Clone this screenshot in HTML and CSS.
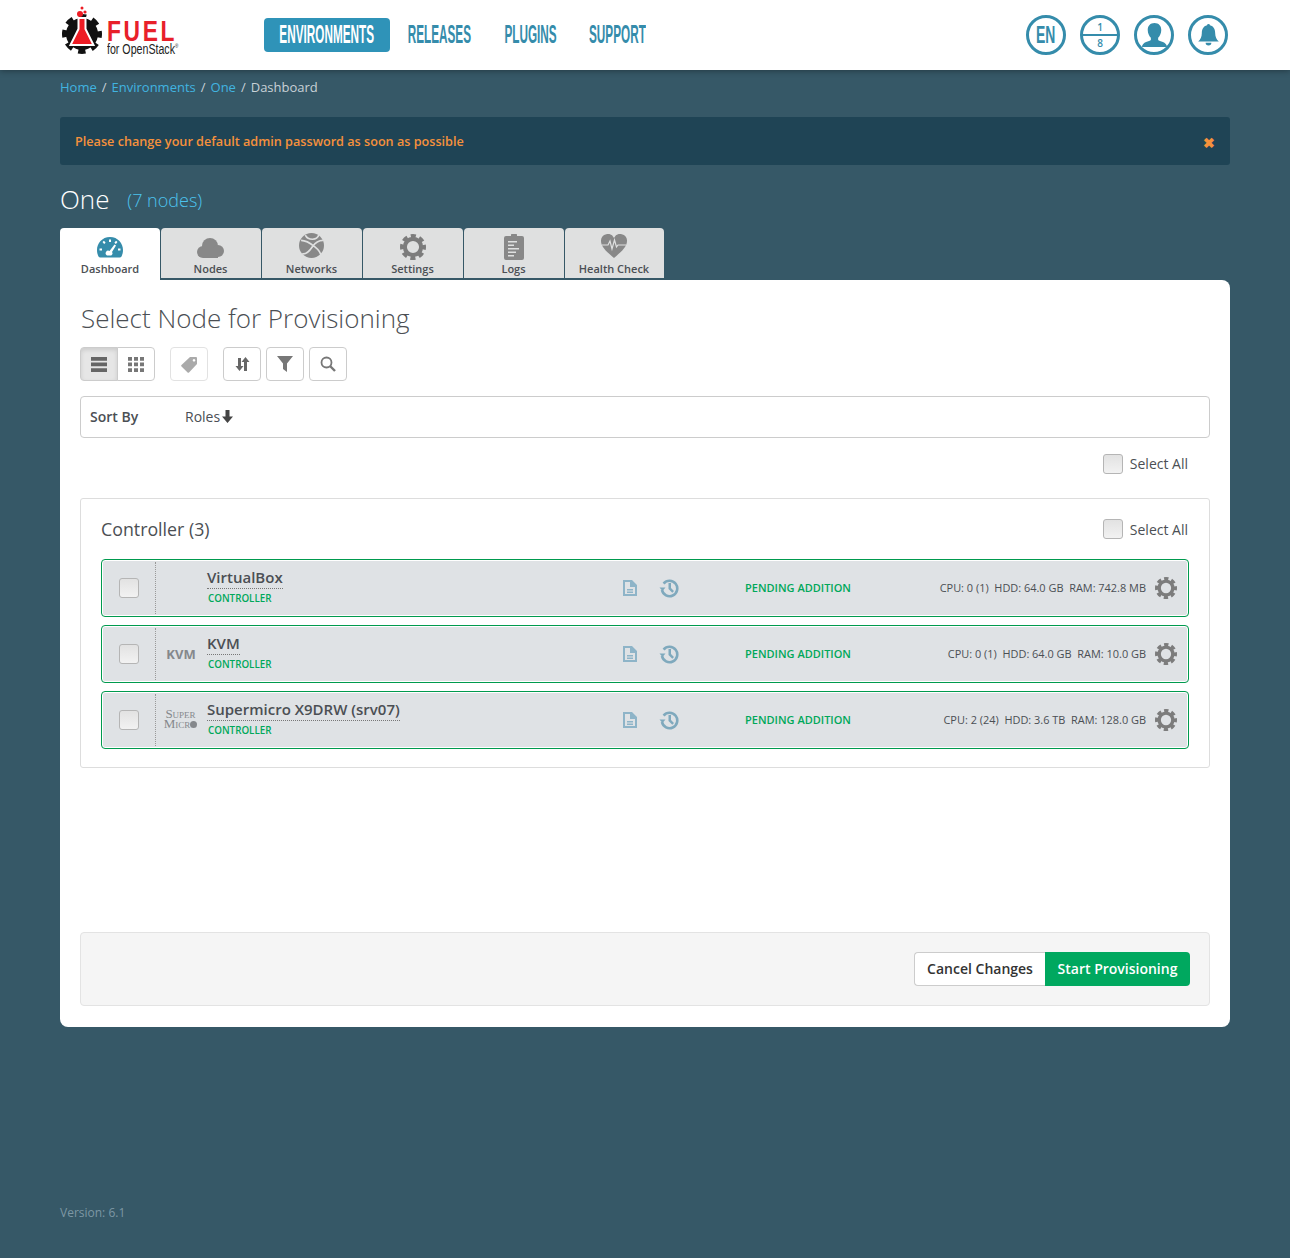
FILE: index.html
```html
<!DOCTYPE html>
<html lang="en">
<head>
    <meta charset="UTF-8">
    <meta name="viewport" content="width=device-width, initial-scale=1.0">
    <title>One - Dashboard</title>
    <link rel="stylesheet" href="styles.css">
</head>
<body>
    <svg class="sprites" width="0" height="0" aria-hidden="true">
        <symbol id="gear" viewBox="0 0 24 24">
            <circle cx="12" cy="12" r="10" fill="none" stroke="currentColor" stroke-width="4" stroke-dasharray="4.6 3.25" stroke-dashoffset="2.3"/>
            <circle cx="12" cy="12" r="7.500" fill="none" stroke="currentColor" stroke-width="3.800"/>
        </symbol>
        <symbol id="doc" viewBox="0 0 14 16">
            <path fill="currentColor" fill-rule="evenodd" d="M0 0h9l5 5v11H0zM2 2v12h10V7H7V2zM4 9h6v1.500H4zM4 11.500h6V13H4z"/>
        </symbol>
        <symbol id="history" viewBox="0 0 20 20">
            <path fill="none" stroke="currentColor" stroke-width="2.600" d="M4.600 5.600A7.700 7.700 0 1 1 3 12"/>
            <path fill="currentColor" d="M0.500 9.500H6.500L3.500 13zM9.500 5H12V10L15 13L13.300 14.700L9.500 11z"/>
        </symbol>
    </svg>

    <header class="topbar">
        <a class="logo" href="#">
            <svg class="logo-mark" width="42" height="50" viewBox="0 0 42 50">
                <circle cx="20" cy="28" r="17" fill="none" stroke="#111" stroke-width="6" stroke-dasharray="7.200 6.150" stroke-dashoffset="3.600" />
                <circle cx="20" cy="28" r="16" fill="#111" />
                <path fill="#ed1c24" stroke="#fff" stroke-width="2" d="M16.500 12h7v11l8 16H8.500l8-16z" />
                <circle cx="18" cy="8" r="3" fill="#ed1c24" />
                <circle cx="23" cy="6" r="1.600" fill="#ed1c24" />
                <circle cx="20" cy="2" r="1.500" fill="#ed1c24" />
            </svg>
            <span class="logo-text">
                <span class="logo-fuel">FUEL</span>
                <span class="logo-sub">for OpenStack<sup>®</sup></span>
            </span>
        </a>
        <nav class="main-nav">
            <a class="nav-item active" href="#"><span>Environments</span></a>
            <a class="nav-item" href="#"><span>Releases</span></a>
            <a class="nav-item" href="#"><span>Plugins</span></a>
            <a class="nav-item" href="#"><span>Support</span></a>
        </nav>
        <div class="top-icons">
            <div class="round-icon lang"><span>EN</span></div>
            <div class="round-icon capacity"><span>1</span><i></i><span>8</span></div>
            <div class="round-icon">
                <svg width="25" height="24" viewBox="0 0 24 26" preserveAspectRatio="none"><path fill="#358cab" d="M12 0c4 0 6.500 3 6.500 7.500 0 3.500-1.500 7-3 8.500v2.500c1 1.500 8.500 2 8.500 7.500H0c0-5.500 7.500-6 8.500-7.500V16c-1.500-1.500-3-5-3-8.500C5.500 3 8 0 12 0z"/></svg>
            </div>
            <div class="round-icon">
                <svg width="21" height="24" viewBox="0 0 22 26" preserveAspectRatio="none"><path fill="#358cab" d="M9.500 2.500a1.500 1.500 0 0 1 3 0C16.500 3.500 18 7 18 11c0 4 1.500 7 3.800 9H.2C2.500 18 4 15 4 11c0-4 1.500-7.500 5.500-8.500zM8 21.500h6a3 3 0 0 1-6 0z"/></svg>
            </div>
        </div>
    </header>

    <main class="page">
        <div class="breadcrumb">
            <a href="#">Home</a><b>/</b><a href="#">Environments</a><b>/</b><a href="#">One</a><b>/</b><span>Dashboard</span>
        </div>

        <div class="alert">
            <span>Please change your default admin password as soon as possible</span>
            <span class="alert-close">✖</span>
        </div>

        <h1 class="env-title">One <span>(7 nodes)</span></h1>

        <div class="tabs">
            <a class="tab active" href="#">
                <svg width="28" height="22" viewBox="0 0 28 22"><path fill="#358cab" fill-rule="evenodd" d="M14 1C6 1 1 7.500 1 14c0 2.500.5 4.500 1.500 6.500 .4.700 1 1 1.800 1h19.400c.8 0 1.400-.3 1.800-1C26.500 18.500 27 16.500 27 14 27 7.500 22 1 14 1zM13 3.500h2v2.500h-2zM6.500 6l1.500-1.300 1.600 2-1.500 1.300zM21.500 6L20 4.700l-1.600 2 1.500 1.300zM3.500 12.500H6v2H3.500zM22 12.500h2.500v2H22zM18.500 8.500l1.500 1-4 6.500a2.500 2.500 0 0 1-.8 3.500H11a2.500 2.500 0 0 1 2.500-4.500z"/></svg>
                <span>Dashboard</span>
            </a>
            <a class="tab" href="#">
                <svg width="27" height="20" viewBox="0 0 27 20"><g fill="#888"><circle cx="6" cy="14" r="6"/><circle cx="13" cy="8" r="8"/><circle cx="21" cy="13" r="6"/><rect x="6" y="10" width="15" height="10"/></g></svg>
                <span>Nodes</span>
            </a>
            <a class="tab" href="#">
                <svg width="25" height="25" viewBox="0 0 24 24"><circle cx="12" cy="12" r="12" fill="#888"/><path fill="none" stroke="#dfe0e0" stroke-width="1.600" d="M2 7c4 0 8 2 13 6s6 7 6 9M23 7c-5 0-8 3-10 6s-5 8-10 7M6 2c1 2 4 4 7 4s5-1 6-4"/></svg>
                <span>Networks</span>
            </a>
            <a class="tab" href="#">
                <svg class="tab-gear" width="26" height="26"><use href="#gear"/></svg>
                <span>Settings</span>
            </a>
            <a class="tab" href="#">
                <svg class="tab-logs" width="20" height="26" viewBox="0 0 20 26"><path fill="#888" fill-rule="evenodd" d="M2 2h5V1.500a3 3 0 0 1 6 0V2h5a2 2 0 0 1 2 2v20a2 2 0 0 1-2 2H2a2 2 0 0 1-2-2V4a2 2 0 0 1 2-2zM4 7v1.500h9V7zM4 10.500V12h6v-1.500zM4 14v1.500h11V14zM4 17.500V19h8v-1.500zM4 21v1.500h6V21z"/></svg>
                <span>Logs</span>
            </a>
            <a class="tab" href="#">
                <svg width="26" height="24" viewBox="0 0 26 24"><path fill="#888" d="M13 24C6 18 0 13 0 7a6.800 6.800 0 0 1 13-3 6.800 6.800 0 0 1 13 3c0 6-6 11-13 17z"/><path fill="none" stroke="#dfe0e0" stroke-width="1.200" d="M1 11h6l2-4 2 8 2.500-9 2 7 1.500-2h8"/></svg>
                <span>Health Check</span>
            </a>
        </div>

        <section class="panel">
            <h2 class="panel-title">Select Node for Provisioning</h2>

            <div class="toolbar">
                <div class="btn-group">
                    <button class="tool-btn pressed">
                        <svg width="16" height="15" viewBox="0 0 16 14" preserveAspectRatio="none"><path fill="#666" d="M0 0h16v3.500H0zM0 5.200h16v3.500H0zM0 10.500h16V14H0z"/></svg>
                    </button>
                    <button class="tool-btn">
                        <svg width="16" height="15" viewBox="0 0 16 14" preserveAspectRatio="none"><path fill="#777" d="M0 0h4v3.500H0zM6 0h4v3.500H6zM12 0h4v3.500h-4zM0 5.200h4v3.500H0zM6 5.200h4v3.500H6zM12 5.200h4v3.500h-4zM0 10.500h4V14H0zM6 10.500h4V14H6zM12 10.500h4V14h-4z"/></svg>
                    </button>
                </div>
                <button class="tool-btn solo dim">
                    <svg width="17" height="17" viewBox="0 0 17 17"><path fill="#aaa" fill-rule="evenodd" d="M9 1h6a1 1 0 0 1 1 1v6L8 16.500a1 1 0 0 1-1.400 0L.500 10.400a1 1 0 0 1 0-1.400zM13 3a1.300 1.300 0 1 0 .01 0z"/></svg>
                </button>
                <button class="tool-btn solo">
                    <svg width="15" height="15" viewBox="0 0 15 15"><path fill="#666" d="M3 1h3v8h2.500L4.500 14 .5 9H3zM9 14V5H6.500L10.500 0 14.500 5H12v9z"/></svg>
                </button>
                <button class="tool-btn solo near">
                    <svg width="16" height="16" viewBox="0 0 16 16"><path fill="#777" d="M0 0h16L10 7.500V16L6 13V7.500z"/></svg>
                </button>
                <button class="tool-btn solo near">
                    <svg width="16" height="16" viewBox="0 0 16 16"><circle cx="6.500" cy="6.500" r="5" fill="none" stroke="#777" stroke-width="1.800"/><path stroke="#777" stroke-width="2.400" d="M10 10l5 5"/></svg>
                </button>
            </div>

            <div class="sort-bar">
                <strong>Sort By</strong>
                <span class="sort-item">Roles<svg width="11" height="13" viewBox="0 0 11 13"><path fill="#444" d="M3.500 0h4v6.500h3.500L5.500 13 0 6.500h3.500z"/></svg></span>
            </div>

            <label class="select-all top"><span class="check"></span>Select All</label>

            <div class="group">
                <div class="group-head">
                    <h3>Controller (3)</h3>
                    <label class="select-all"><span class="check"></span>Select All</label>
                </div>

                <div class="node">
                    <div class="node-check"><span class="check"></span></div>
                    <div class="node-logo"></div>
                    <div class="node-info">
                        <div class="node-name">VirtualBox</div>
                        <div class="node-role">CONTROLLER</div>
                    </div>
                    <svg class="node-doc" width="14" height="16"><use href="#doc"/></svg>
                    <svg class="node-history" width="20" height="20"><use href="#history"/></svg>
                    <div class="node-status">PENDING ADDITION</div>
                    <div class="node-specs">CPU: 0 (1)&nbsp; HDD: 64.0 GB&nbsp; RAM: 742.8 MB</div>
                    <svg class="node-gear" width="22" height="22"><use href="#gear"/></svg>
                </div>

                <div class="node">
                    <div class="node-check"><span class="check"></span></div>
                    <div class="node-logo kvm">KVM</div>
                    <div class="node-info">
                        <div class="node-name">KVM</div>
                        <div class="node-role">CONTROLLER</div>
                    </div>
                    <svg class="node-doc" width="14" height="16"><use href="#doc"/></svg>
                    <svg class="node-history" width="20" height="20"><use href="#history"/></svg>
                    <div class="node-status">PENDING ADDITION</div>
                    <div class="node-specs">CPU: 0 (1)&nbsp; HDD: 64.0 GB&nbsp; RAM: 10.0 GB</div>
                    <svg class="node-gear" width="22" height="22"><use href="#gear"/></svg>
                </div>

                <div class="node">
                    <div class="node-check"><span class="check"></span></div>
                    <div class="node-logo smc"><span>Super</span><span>Micr<i></i></span></div>
                    <div class="node-info">
                        <div class="node-name">Supermicro X9DRW (srv07)</div>
                        <div class="node-role">CONTROLLER</div>
                    </div>
                    <svg class="node-doc" width="14" height="16"><use href="#doc"/></svg>
                    <svg class="node-history" width="20" height="20"><use href="#history"/></svg>
                    <div class="node-status">PENDING ADDITION</div>
                    <div class="node-specs">CPU: 2 (24)&nbsp; HDD: 3.6 TB&nbsp; RAM: 128.0 GB</div>
                    <svg class="node-gear" width="22" height="22"><use href="#gear"/></svg>
                </div>
            </div>

            <div class="actions">
                <button class="btn-cancel">Cancel Changes</button>
                <button class="btn-start">Start Provisioning</button>
            </div>
        </section>

        <footer class="version">Version: 6.1</footer>
    </main>
</body>
</html>
```

FILE: styles.css
```css
* {
    box-sizing: border-box;
}

body {
    margin: 0;
    height: 1258px;
    overflow: hidden;
    background: #365867;
    color: #4b4f54;
    font-family: "Open Sans", Arial, sans-serif;
    font-size: 14px;
}

a {
    text-decoration: none;
}

.sprites {
    position: absolute;
}

/* top bar */
.topbar {
    display: flex;
    align-items: center;
    height: 70px;
    padding: 0 62px;
    background: #fff;
    box-shadow: 0 1px 6px rgba(0, 0, 0, 0.35);
}

.logo {
    display: flex;
    align-items: flex-start;
    align-self: flex-start;
    width: 202px;
    height: 58px;
    margin-top: 6px;
}

.logo-text {
    display: flex;
    flex-direction: column;
    margin: 13px 0 0 3px;
}

.logo-fuel {
    color: #e8202a;
    font-family: "Liberation Sans", Arial, sans-serif;
    font-weight: 700;
    font-size: 30px;
    line-height: 24px;
    letter-spacing: 3.5px;
    transform: scaleX(0.76);
    transform-origin: left;
}

.logo-sub {
    color: #222;
    font-family: "Liberation Sans", Arial, sans-serif;
    font-size: 14px;
    line-height: 13px;
    white-space: nowrap;
    transform: scaleX(0.76);
    transform-origin: left;
}

.logo-sub sup {
    font-size: 6px;
    line-height: 0;
}

.main-nav {
    display: flex;
    align-items: center;
}

.nav-item {
    display: flex;
    justify-content: center;
    align-items: center;
    height: 34px;
    padding-bottom: 2px;
    color: #358cab;
    font-family: "Liberation Sans", Arial, sans-serif;
    font-weight: 700;
    font-size: 25px;
    text-transform: uppercase;
}

.nav-item span {
    transform: scaleX(0.47);
    white-space: nowrap;
}

.nav-item:nth-child(1) {
    width: 126px;
}

.nav-item:nth-child(2) {
    width: 63px;
    margin-left: 18px;
}

.nav-item:nth-child(3) {
    width: 51px;
    margin-left: 34px;
}

.nav-item:nth-child(4) {
    width: 56px;
    margin-left: 33px;
}

.nav-item.active {
    background: #2f93b8;
    border-radius: 4px;
    color: #fff;
}

.top-icons {
    display: flex;
    gap: 14px;
    margin-left: auto;
}

.round-icon {
    display: flex;
    flex-direction: column;
    justify-content: center;
    align-items: center;
    width: 40px;
    height: 40px;
    border: 3px solid #358cab;
    border-radius: 50%;
    color: #358cab;
}

.round-icon.lang span {
    font-family: "Liberation Sans", Arial, sans-serif;
    font-weight: 700;
    font-size: 24px;
    transform: scaleX(0.58);
}

.round-icon.capacity {
    font-size: 10px;
    font-weight: 600;
    line-height: 12px;
}

.round-icon.capacity i {
    display: block;
    width: 100%;
    height: 2px;
    margin: 1px 0;
    background: #358cab;
}

/* page */
.page {
    padding: 0 60px;
}

.breadcrumb {
    display: flex;
    align-items: center;
    gap: 5px;
    height: 34px;
    font-size: 13px;
    color: #c8d1d6;
}

.breadcrumb a {
    color: #41b4e0;
}

.breadcrumb b {
    font-weight: 400;
}

.alert {
    display: flex;
    justify-content: space-between;
    align-items: center;
    height: 48px;
    margin-top: 13px;
    padding: 0 15px;
    background: #1f4455;
    border-radius: 3px;
    color: #f5913c;
    font-size: 12.650px;
    font-weight: 600;
}

.alert-close {
    font-size: 14px;
    margin-top: 2px;
}

.env-title {
    margin: 15px 0 0;
    height: 48px;
    color: #fff;
    font-size: 26px;
    font-weight: 300;
    line-height: 38px;
}

.env-title span {
    margin-left: 11px;
    color: #4cc3ee;
    font-size: 18px;
    line-height: 1;
    vertical-align: 2px;
}

.tabs {
    display: flex;
    gap: 1px;
    height: 50px;
}

.tab {
    display: flex;
    flex-direction: column;
    justify-content: flex-end;
    align-items: center;
    width: 100px;
    padding: 0 1px 2px 0;
    background: #dfe0e0;
    border-radius: 4px 4px 0 0;
    color: #4b4f54;
    font-size: 11px;
    font-weight: 600;
}

.tab:last-child {
    width: 99px;
}

.tab svg {
    margin-bottom: 3px;
}

.tab span {
    line-height: 15px;
}

.tab .tab-gear,
.tab .tab-logs {
    margin-bottom: 1px;
}

.tab-gear {
    color: #7c7c7c;
}

.tab.active {
    height: 52px;
    padding: 0 0 4px;
    background: #fff;
    position: relative;
    z-index: 1;
}

.panel {
    height: 747px;
    margin-top: 2px;
    padding: 20px;
    background: #fff;
    border-radius: 0 8px 8px 8px;
}

.panel-title {
    margin: -1px 0 10px 1px;
    color: #4b4f54;
    font-size: 26px;
    font-weight: 300;
    line-height: 38px;
}

.toolbar {
    display: flex;
    height: 34px;
}

.btn-group {
    display: flex;
}

.tool-btn {
    display: flex;
    justify-content: center;
    align-items: center;
    width: 38px;
    height: 34px;
    padding: 0;
    background: #fff;
    border: 1px solid #ccc;
    border-radius: 0 4px 4px 0;
    margin-left: -1px;
}

.tool-btn.pressed {
    width: 38px;
    margin-left: 0;
    background: #e6e6e6;
    border-radius: 4px 0 0 4px;
    box-shadow: inset 0 2px 4px rgba(0, 0, 0, 0.12);
}

.tool-btn.solo {
    border-radius: 4px;
    margin-left: 15px;
}

.tool-btn.dim {
    border-color: #e2e2e2;
}

.tool-btn.near {
    margin-left: 5px;
}

.sort-bar {
    display: flex;
    align-items: center;
    height: 42px;
    margin-top: 15px;
    padding: 0 9px 2px;
    border: 1px solid #ccc;
    border-radius: 4px;
}

.sort-bar strong {
    width: 95px;
    font-weight: 600;
}

.sort-item {
    display: flex;
    align-items: center;
    gap: 2px;
}

.select-all {
    display: flex;
    align-items: center;
    gap: 7px;
    color: #4b4f54;
}

.select-all.top {
    justify-content: flex-end;
    height: 20px;
    margin: 15px 22px 0 0;
}

.select-all.top .check {
    margin-top: 2px;
}

.check {
    display: block;
    width: 20px;
    height: 20px;
    background: linear-gradient(to bottom, #e2e2e2, #f2f2f2);
    border: 1px solid #b5b5b5;
    border-radius: 3px;
}

.group {
    height: 270px;
    margin-top: 25px;
    padding: 0 20px;
    border: 1px solid #ddd;
    border-radius: 3px;
}

.group-head {
    display: flex;
    justify-content: space-between;
    align-items: center;
    height: 60px;
    padding-right: 1px;
}

.group-head h3 {
    margin: 0;
    font-size: 17.800px;
    font-weight: 400;
}

.node {
    display: flex;
    align-items: center;
    height: 58px;
    margin-bottom: 8px;
    background: #dfe2e5;
    border: 1px solid #009a4e;
    border-radius: 4px;
    box-shadow: inset 0 0 0 1px #fff;
}

.node-check {
    display: flex;
    justify-content: center;
    align-items: center;
    width: 54px;
    height: 52px;
    border-right: 1px dotted #999;
}

.node-logo {
    display: flex;
    flex-direction: column;
    justify-content: center;
    align-items: center;
    width: 51px;
    color: #85888c;
}

.node-logo.kvm {
    font-size: 13px;
    font-weight: 700;
    padding-right: 1px;
}

.node-logo.smc {
    font-family: "Liberation Serif", serif;
    font-size: 13px;
    font-variant: small-caps;
    line-height: 10px;
    padding: 0 2px 2px 0;
}

.node-logo.smc i {
    display: inline-block;
    width: 7px;
    height: 7px;
    background: #85888c;
    border-radius: 50%;
}

.node-info {
    width: 416px;
    padding-bottom: 4px;
}

.node-name {
    display: table;
    color: #4b4f54;
    font-size: 15px;
    font-weight: 600;
    line-height: 20px;
    border-bottom: 1px dotted #777;
    padding-bottom: 1px;
}

.node-role {
    margin-top: 3px;
    padding-left: 1px;
    color: #00a85a;
    font-size: 9.800px;
    font-weight: 600;
    line-height: 14px;
}

.node-doc {
    color: #8eb4c8;
}

.node-history {
    margin-left: 22px;
    color: #7fa9bd;
}

.node-status {
    margin-left: 66px;
    padding-bottom: 2px;
    color: #00a85a;
    font-size: 11px;
    font-weight: 600;
}

.node-specs {
    margin-left: auto;
    padding-bottom: 2px;
    color: #4b4f54;
    font-size: 10.950px;
    white-space: nowrap;
}

.node-gear {
    margin: 0 11px 0 9px;
    color: #7c7c7c;
}

.actions {
    display: flex;
    justify-content: flex-end;
    align-items: center;
    height: 74px;
    margin-top: 164px;
    padding-right: 19px;
    background: #f5f5f5;
    border: 1px solid #e3e3e3;
    border-radius: 4px;
}

.actions button {
    height: 34px;
    padding-bottom: 3px;
    font-family: inherit;
    font-size: 14px;
    font-weight: 600;
}

.btn-cancel {
    width: 131px;
    background: #fff;
    border: 1px solid #ccc;
    border-right: none;
    border-radius: 4px 0 0 4px;
    color: #333;
}

.btn-start {
    width: 145px;
    background: #00a85f;
    border: none;
    border-radius: 0 4px 4px 0;
    color: #fff;
}

.version {
    margin-top: 177px;
    color: #7d97a4;
    font-size: 12px;
}
```
